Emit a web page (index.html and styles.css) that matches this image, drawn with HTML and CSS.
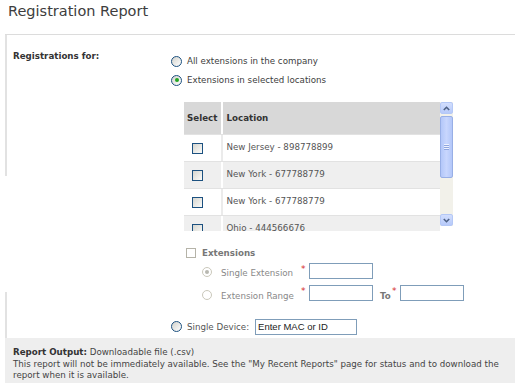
FILE: index.html
```html
<!DOCTYPE html>
<html lang="en">
<head>
    <meta charset="UTF-8">
    <meta name="viewport" content="width=device-width, initial-scale=1.0">
    <title>Registration Report</title>
    <link rel="stylesheet" href="styles.css">
</head>
<body>
    <h1 class="title">Registration Report</h1>
    <div class="panel">
        <div class="rail">
            <div class="rail-top"></div>
            <div class="rail-gap"></div>
            <div class="rail-bottom"></div>
        </div>
        <div class="content">
            <div class="for-row">
                <div class="field-label">Registrations for:</div>
                <div class="options">
                    <div class="option"><span class="radio"></span>All extensions in the company</div>
                    <div class="option"><span class="radio checked"></span>Extensions in selected locations</div>

                    <div class="loc-box">
                        <div class="loc-list">
                            <div class="loc-row loc-head"><div class="loc-sel">Select</div><div class="loc-name">Location</div></div>
                            <div class="loc-row"><div class="loc-sel"><span class="check"></span></div><div class="loc-name">New Jersey - 898778899</div></div>
                            <div class="loc-row alt"><div class="loc-sel"><span class="check"></span></div><div class="loc-name">New York - 677788779</div></div>
                            <div class="loc-row"><div class="loc-sel"><span class="check"></span></div><div class="loc-name">New York - 677788779</div></div>
                            <div class="loc-row alt"><div class="loc-sel"><span class="check"></span></div><div class="loc-name">Ohio - 444566676</div></div>
                        </div>
                        <div class="scrollbar">
                            <div class="sb-btn">
                                <svg width="7" height="5" viewBox="0 0 7 5"><polyline points="0.8,4 3.5,1.3 6.2,4" fill="none" stroke="#4d6185" stroke-width="1.6"/></svg>
                            </div>
                            <div class="sb-thumb">
                                <svg width="5" height="6" viewBox="0 0 5 6"><path d="M0 0.5H5M0 2.5H5M0 4.5H5" stroke="#eef2fe" stroke-width="1"/><path d="M0 1.5H5M0 3.5H5M0 5.5H5" stroke="#8fa6df" stroke-width="1"/></svg>
                            </div>
                            <div class="sb-track"></div>
                            <div class="sb-btn">
                                <svg width="7" height="5" viewBox="0 0 7 5"><polyline points="0.8,1 3.5,3.7 6.2,1" fill="none" stroke="#4d6185" stroke-width="1.6"/></svg>
                            </div>
                        </div>
                    </div>

                    <div class="ext-head"><span class="check disabled"></span>Extensions</div>
                    <div class="ext-opt">
                        <span class="radio disabled checked"></span>
                        <span class="ext-label">Single Extension</span>
                        <span class="req">*</span>
                        <input class="ext-input" type="text">
                    </div>
                    <div class="ext-opt">
                        <span class="radio disabled"></span>
                        <span class="ext-label">Extension Range</span>
                        <span class="req">*</span>
                        <input class="ext-input" type="text">
                        <span class="to">To</span>
                        <span class="req">*</span>
                        <input class="ext-input" type="text">
                    </div>

                    <div class="option device"><span class="radio"></span>Single Device:<input class="device-input" type="text" value="Enter MAC or ID"></div>
                </div>
            </div>
        </div>
    </div>
    <div class="output">
        <p class="out-title"><b>Report Output:</b> Downloadable file (.csv)</p>
        <p class="out-note">This report will not be immediately available. See the "My Recent Reports" page for status and to download the report when it is available.</p>
    </div>
</body>
</html>
```

FILE: styles.css
```css
body {
    margin: 0;
    width: 515px;
    font-family: "DejaVu Sans", Verdana, sans-serif;
    font-size: 8.7px;
    color: #444;
    background: #fff;
}
.title {
    margin: 0 0 14px;
    padding: 3px 0 0 8px;
    font-size: 14.5px;
    line-height: 17px;
    font-weight: normal;
    color: #3d3d3d;
}
.panel {
    display: flex;
    margin-left: 5px;
    border-top: 1px solid #dcdcdc;
}
.rail {
    display: flex;
    flex-direction: column;
    width: 2px;
    flex-shrink: 0;
}
.rail-top {
    height: 141px;
    background: #e2e2e2;
}
.rail-gap {
    height: 116px;
}
.rail-bottom {
    flex: 1;
    background: #e2e2e2;
}
.content {
    flex: 1;
    padding: 10px 0 2px 6px;
}
.for-row {
    display: grid;
    grid-template-columns: 157px 1fr;
}
.field-label {
    margin-top: 5px;
    font-weight: bold;
    color: #333;
    line-height: 12px;
}
.options {
    padding-top: 6.5px;
}
.option {
    display: flex;
    align-items: center;
    height: 19px;
    color: #3d3d3d;
}
.radio {
    display: flex;
    align-items: center;
    justify-content: center;
    flex-shrink: 0;
    width: 11px;
    height: 11px;
    box-sizing: border-box;
    margin: 0 5px 0 1px;
    border: 1px solid #1c5180;
    border-radius: 50%;
    background: linear-gradient(135deg, #d2d2cc, #fff);
}
.radio.checked::after {
    content: "";
    width: 4px;
    height: 4px;
    border-radius: 50%;
    background: #22a622;
}
.radio.disabled {
    width: 10px;
    height: 10px;
    margin: 3px 9.5px 0 0;
    border-color: #cac8bb;
    background: #fff;
}
.radio.disabled.checked::after {
    background: #b8b8b0;
}

/* Locations list */
.loc-box {
    display: flex;
    width: 271px;
    height: 129px;
    margin: 12.5px 0 0 14px;
}
.loc-list {
    width: 256px;
    height: 129px;
    overflow: hidden;
}
.loc-row {
    display: grid;
    grid-template-columns: 37px 1fr;
    height: 27px;
    box-sizing: border-box;
    border-top: 1px solid #e2e2e2;
    background: #fff;
    color: #555;
}
.loc-row.alt {
    background: #efefef;
}
.loc-head {
    height: 32px;
    border-top: 0;
    background: #d8d8d8;
    font-weight: bold;
    color: #333;
}
.loc-sel {
    display: flex;
    align-items: center;
    padding-left: 8px;
}
.loc-head .loc-sel {
    padding-left: 3px;
}
.loc-name {
    display: flex;
    align-items: center;
    padding: 0 0 3px 3.5px;
    border-left: 2px solid #ebebeb;
}
.loc-head .loc-name, .loc-row.alt .loc-name {
    border-left-color: #fff;
}
.loc-head .loc-name {
    padding-bottom: 0;
}
.check {
    width: 11px;
    height: 11px;
    box-sizing: border-box;
    border: 1px solid #1c5180;
    background: linear-gradient(135deg, #d6d6d0, #fbfbf9);
}
.check.disabled {
    width: 10px;
    height: 10px;
    margin-right: 6px;
    border-color: #b5b3a8;
    background: #fff;
}

/* fake XP scrollbar */
.scrollbar {
    display: flex;
    flex-direction: column;
    width: 13px;
    height: 124px;
    background: #f2f1ea;
}
.sb-btn {
    display: flex;
    align-items: center;
    justify-content: center;
    height: 12px;
    box-sizing: border-box;
    border: 1px solid #b4c8f6;
    border-radius: 2px;
    background: linear-gradient(#d2defd, #b7cafa);
}
.sb-thumb {
    display: flex;
    align-items: center;
    justify-content: center;
    height: 62px;
    margin-top: 2px;
    box-sizing: border-box;
    border: 1px solid #98afe6;
    border-radius: 2px;
    background: linear-gradient(90deg, #b3c7f9, #c8d6fd, #b3c7f9);
}
.sb-track {
    flex: 1;
}

/* Extensions */
.ext-head {
    display: flex;
    align-items: center;
    height: 12px;
    margin: 15.5px 0 4px 16px;
    font-weight: bold;
    color: #777;
}
.ext-opt {
    display: flex;
    align-items: center;
    height: 16px;
    margin-left: 31.5px;
}
.ext-opt + .ext-opt {
    margin-top: 6.5px;
}
.ext-label {
    width: 80px;
    padding-top: 5px;
    color: #888;
}
.req {
    align-self: flex-start;
    width: 8px;
    margin-top: 2px;
    font-size: 9px;
    line-height: 9px;
    color: #d42a2a;
}
.ext-input, .device-input {
    margin: 0;
    padding: 0;
    height: 16px;
    box-sizing: border-box;
    border: 1px solid #7f9db9;
    background: #fff;
    outline: none;
}
.ext-input {
    width: 64px;
}
.to {
    width: 12px;
    margin-left: 7px;
    padding-top: 5px;
    font-weight: bold;
    color: #777;
}
.option.device {
    margin-top: 16px;
    color: #555;
}
.device-input {
    width: 102px;
    margin-left: 6px;
    padding-left: 2px;
    font-family: "Liberation Sans", Arial, sans-serif;
    font-size: 9.5px;
    color: #222;
}

/* Report output note */
.output {
    margin-left: 5px;
    padding: 7.7px 4px 12px 8px;
    background: #eee;
    color: #444;
}
.output p {
    margin: 0;
}
.out-title {
    line-height: 12px;
}
.out-title b {
    color: #333;
}
.out-note {
    margin-top: 1.5px !important;
    line-height: 11.3px;
}
```
